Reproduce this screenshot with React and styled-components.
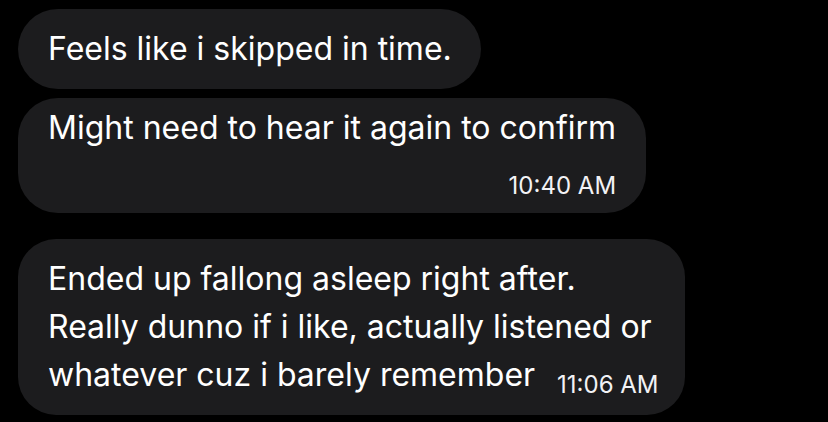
import React from "react";
import styled, { createGlobalStyle } from "styled-components";

const GlobalStyle = createGlobalStyle`
  html, body {
    margin: 0;
    padding: 0;
    background: #000;
  }
  body {
    font-family: Inter, "Noto Sans", "Liberation Sans", sans-serif;
    -webkit-font-smoothing: antialiased;
  }
`;

const Thread = styled.div`
  display: flex;
  flex-direction: column;
  align-items: flex-start;
  gap: 26px;
  padding: 9px 18px;
  width: 828px;
  height: 422px;
  box-sizing: border-box;
  overflow: hidden;
  background: #000;
`;

const Group = styled.div`
  display: flex;
  flex-direction: column;
  align-items: flex-start;
  gap: 9px;
`;

const Bubble = styled.div`
  display: flex;
  flex-direction: column;
  background: #1c1c1e;
  color: #fff;
  padding: ${(p) => p.$padding || "21px 29px 21px 30px"};
  border-radius: ${(p) => p.$radius || 40}px;
`;

const Text = styled.div`
  font-size: 32px;
  line-height: ${(p) => p.$lineHeight || 38}px;
  white-space: nowrap;
`;

const Time = styled.span`
  display: ${(p) => (p.$inline ? "inline-block" : "block")};
  align-self: flex-end;
  font-size: 24px;
  line-height: 28px;
  color: #f2f2f5;
  white-space: nowrap;
  margin-top: ${(p) => (p.$inline ? 0 : 25)}px;
  margin-left: ${(p) => (p.$inline ? 22 : 0)}px;
  vertical-align: ${(p) => (p.$inline ? "-7px" : "baseline")};
`;

const messages = [
  [
    { text: ["Feels like i skipped in time."] },
    {
      text: ["Might need to hear it again to confirm"],
      time: "10:40 AM",
      padding: "11px 30px 13px 30px",
    },
  ],
  [
    {
      text: [
        "Ended up fallong asleep right after.",
        "Really dunno if i like, actually listened or",
        "whatever cuz i barely remember",
      ],
      time: "11:06 AM",
      inlineTime: true,
      padding: "16px 26px 16px 30px",
      radius: 38,
      lineHeight: 48,
    },
  ],
];

const Message = ({ msg }) => {
  if (msg.inlineTime) {
    return (
      <Bubble $padding={msg.padding} $radius={msg.radius}>
        <Text $lineHeight={msg.lineHeight}>
          {msg.text.map((line, i) => (
            <React.Fragment key={i}>
              {line}
              {i < msg.text.length - 1 ? <br /> : null}
            </React.Fragment>
          ))}
          <Time $inline>{msg.time}</Time>
        </Text>
      </Bubble>
    );
  }
  return (
    <Bubble $padding={msg.padding} $radius={msg.radius}>
      <Text $lineHeight={msg.lineHeight}>{msg.text[0]}</Text>
      {msg.time && <Time>{msg.time}</Time>}
    </Bubble>
  );
};

export default function App() {
  return (
    <>
      <GlobalStyle />
      <Thread>
        {messages.map((group, gi) => (
          <Group key={gi}>
            {group.map((msg, mi) => (
              <Message key={mi} msg={msg} />
            ))}
          </Group>
        ))}
      </Thread>
    </>
  );
}
